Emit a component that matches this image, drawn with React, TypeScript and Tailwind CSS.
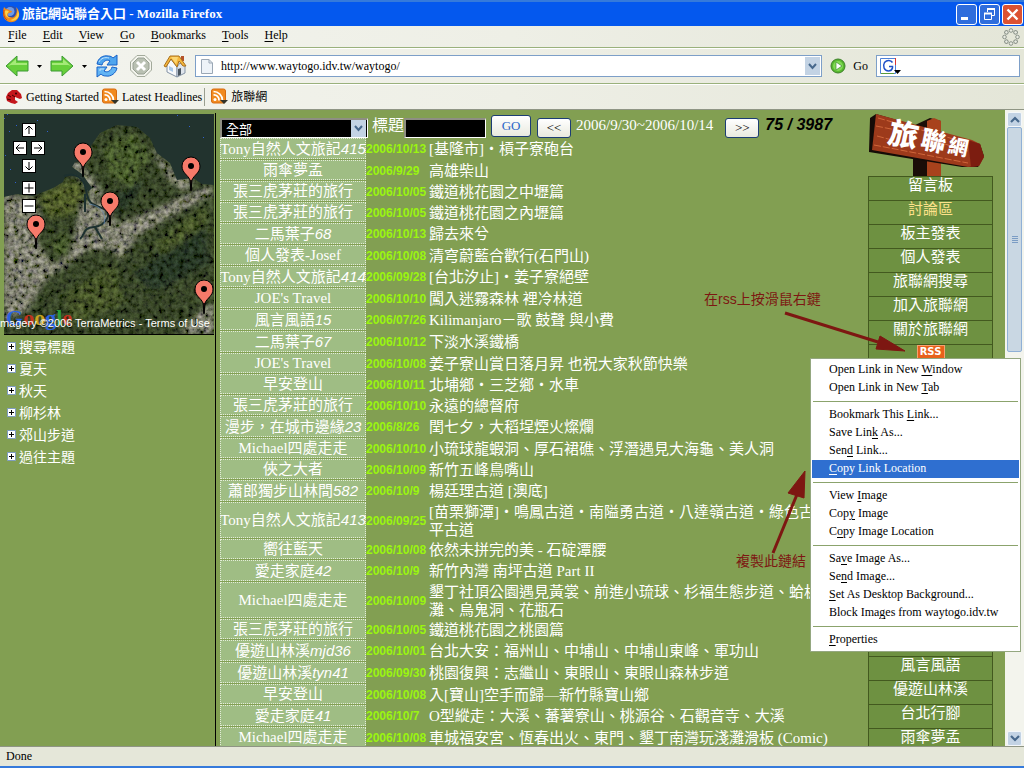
import React from 'react';

type Trip = { name: string; num?: string; date: string; title: string; more?: string };

const trips: Trip[] = [
  { name: 'Tony自然人文旅記', num: '415', date: '2006/10/13', title: '[基隆市]・槓子寮砲台' },
  { name: '雨傘夢孟', date: '2006/9/29', title: '高雄柴山' },
  { name: '張三虎茅莊的旅行', date: '2006/10/05', title: '鐵道桃花園之中壢篇' },
  { name: '張三虎茅莊的旅行', date: '2006/10/05', title: '鐵道桃花園之內壢篇' },
  { name: '二馬葉子', num: '68', date: '2006/10/13', title: '歸去來兮' },
  { name: '個人發表-Josef', date: '2006/10/08', title: '清穹蔚藍合歡行(石門山)' },
  { name: 'Tony自然人文旅記', num: '414', date: '2006/09/28', title: '[台北汐止]・姜子寮絕壁' },
  { name: "JOE's Travel", date: '2006/10/10', title: '闖入迷霧森林 裡冷林道' },
  { name: '風言風語', num: '15', date: '2006/07/26', title: 'Kilimanjaro－歌 鼓聲 與小費' },
  { name: '二馬葉子', num: '67', date: '2006/10/12', title: '下淡水溪鐵橋' },
  { name: "JOE's Travel", date: '2006/10/08', title: '姜子寮山賞日落月昇 也祝大家秋節快樂' },
  { name: '早安登山', date: '2006/10/11', title: '北埔鄉・三芝鄉・水車' },
  { name: '張三虎茅莊的旅行', date: '2006/10/10', title: '永遠的總督府' },
  { name: '漫步，在城市邊緣', num: '23', date: '2006/8/26', title: '閏七夕，大稻埕煙火燦爛' },
  { name: 'Michael四處走走', date: '2006/10/10', title: '小琉球龍蝦洞、厚石裙礁、浮潛遇見大海龜、美人洞' },
  { name: '俠之大者', date: '2006/10/09', title: '新竹五峰鳥嘴山' },
  { name: '蕭郎獨步山林間', num: '582', date: '2006/10/9', title: '楊廷理古道 [澳底]' },
  { name: 'Tony自然人文旅記', num: '413', date: '2006/09/25', title: '[苗栗獅潭]・鳴鳳古道・南隘勇古道・八達嶺古道・綠色古', more: '平古道' },
  { name: '嚮往藍天', date: '2006/10/08', title: '依然未拼完的美 - 石碇潭腰' },
  { name: '愛走家庭', num: '42', date: '2006/10/9', title: '新竹內灣 南坪古道 Part II' },
  { name: 'Michael四處走走', date: '2006/10/09', title: '墾丁社頂公園遇見黃裳、前進小琉球、杉福生態步道、蛤板', more: '灘、烏鬼洞、花瓶石' },
  { name: '張三虎茅莊的旅行', date: '2006/10/05', title: '鐵道桃花園之桃園篇' },
  { name: '優遊山林溪', num: 'mjd36', date: '2006/10/01', title: '台北大安：福州山、中埔山、中埔山東峰、軍功山' },
  { name: '優遊山林溪', num: 'tyn41', date: '2006/09/30', title: '桃園復興：志繼山、東眼山、東眼山森林步道' },
  { name: '早安登山', date: '2006/10/08', title: '入[寶山]空手而歸—新竹縣寶山鄉' },
  { name: '愛走家庭', num: '41', date: '2006/10/7', title: 'O型縱走：大溪、蕃薯寮山、桃源谷、石觀音寺、大溪' },
  { name: 'Michael四處走走', date: '2006/10/08', title: '車城福安宮、恆春出火、東門、墾丁南灣玩淺灘滑板 (Comic)' },
];

function Key({ text, at }: { text: string; at: number }) {
  return (
    <span className="whitespace-pre">
      {text.slice(0, at)}
      <span className="underline underline-offset-2">{text[at]}</span>
      {text.slice(at + 1)}
    </span>
  );
}

function FirefoxIcon() {
  return (
    <svg viewBox="0 0 18 18" className="size-[18px]">
      <circle cx="9" cy="8.500" r="7.500" fill="#2a4fb0" />
      <circle cx="8" cy="6.500" r="4.500" fill="#6f9be6" />
      <path d="M2 2 C0 8 1 14 5 16 C10 19 16 16 17 11 C17.500 8 17 5 14 2 C15 5 15 7 14 9 C13 12 11 13 8 12 C5 11.500 5 9 7 8 C9 8 10 7 10 6 C8 6 7 4 4 4 Z" fill="#f08a1c" />
      <path d="M15 3 C17 9 14 14 8 15 C12 17 17 14 17 9 Z" fill="#fbd24a" />
      <path d="M3 6 C4 5 6 6 7 6.500 L5 9 C5 11 6 12 8 13 C5 13 3 11 3 6" fill="#fbd24a" />
      <path d="M2 5 C1 9 2 13 5 15" stroke="#c34410" fill="none" />
    </svg>
  );
}

function RssIcon() {
  return (
    <svg viewBox="0 0 18 18" className="size-[18px]">
      <rect x="0.500" y="1" width="14" height="14" rx="2" fill="#f18a1f" stroke="#d66a10" />
      <circle cx="4" cy="11.500" r="1.500" fill="#fff" />
      <path d="M2.500 7 A5 5 0 0 1 8 12.500 M2.500 3.500 A9 9 0 0 1 11.500 12.500" stroke="#fff" strokeWidth="1.700" fill="none" />
      <path d="M9 12 H17 L13 16 Z" fill="#33332a" />
    </svg>
  );
}

function Arrow({ flip }: { flip?: boolean }) {
  return (
    <svg viewBox="0 0 24 22" className={flip ? 'h-[22px] w-6 -scale-x-100' : 'h-[22px] w-6'}>
      <path d="M1 11 L12 1 V6 H23 V16 H12 V21 Z" fill="#67cf3a" stroke="#3d9a34" strokeLinejoin="round" />
      <path d="M3 11 L11 4 V8 H22 V10 H6 Z" fill="#a5ea78" />
    </svg>
  );
}

function Tri() {
  return (
    <svg viewBox="0 0 5 3" className="h-[3px] w-[5px]">
      <path d="M0 0 H5 L2.500 3 Z" fill="#000" />
    </svg>
  );
}

function ReloadIcon() {
  return (
    <svg viewBox="0 0 24 24" className="size-6">
      <path d="M2 10 C3 4 8 1 13 2 C16 2 17 3 18 4 L22 1 V11 H12 L15 7 C12 5 8 7 7 11 Z" fill="#4fa5ee" stroke="#1560c8" strokeLinejoin="round" />
      <path d="M22 14 C21 19 16 23 11 22 C8 22 7 21 6 20 L2 23 V13 H12 L9 17 C12 19 16 17 17 13 Z" fill="#62b4f4" stroke="#1560c8" strokeLinejoin="round" />
      <path d="M4 8 C6 4 10 3 14 4 M5 17 V15 H9" stroke="#c3e4fb" fill="none" />
    </svg>
  );
}

function StopIcon() {
  return (
    <svg viewBox="0 0 24 24" className="size-6">
      <path d="M8 1.500 H16 L22.500 8 V16 L16 22.500 H8 L1.500 16 V8 Z" fill="#f4f5ee" stroke="#a3aa9b" />
      <path d="M9 4 H15 L20 9 V15 L15 20 H9 L4 15 V9 Z" fill="#b9c0b2" stroke="#98a093" />
      <path d="M8 8 L16 16 M16 8 L8 16" stroke="#fff" strokeWidth="3" />
    </svg>
  );
}

function HomeIcon() {
  return (
    <svg viewBox="0 0 24 24" className="size-6">
      <path d="M4 11 L8 5 L14 13 V23 L4 18 Z" fill="#f7f9fb" stroke="#8493a6" />
      <path d="M14 13 L17 9 L22 12 V19 L14 23 Z" fill="#dfe5ec" stroke="#8493a6" />
      <path d="M15 15 L18 14 V20.500 L15 22 Z" fill="#4a5560" />
      <path d="M6 12 L10 14 V18 L6 16 Z" fill="#a9c8e8" />
      <path d="M18 2 H21 V7 H18 Z" fill="#b5532a" />
      <path d="M1 12 L7 2 H16 L23 12 L20 12 L16 7 L14 13 L8 5 L3 13 Z" fill="#f6b73c" stroke="#a8701c" strokeLinejoin="round" />
      <path d="M8 3 H15 L13 10 Z" fill="#fbd673" />
    </svg>
  );
}

function TitleBar() {
  const frame = 'flex size-[21px] items-center justify-center rounded-[3px] border border-white';
  return (
    <header className="flex h-[26px] shrink-0 items-center border-t-2 border-[#357adb] bg-[#0458ee] pr-px pl-[2px]">
      <FirefoxIcon />
      <h1 className="ml-[2px] flex-1 text-[13px] leading-5 font-bold text-white">旅記網站聯合入口 - Mozilla Firefox</h1>
      <div className="flex gap-[2px]">
        <button aria-label="Minimize" className={frame + ' bg-[#2f6ddc]'}>
          <svg viewBox="0 0 19 19" className="size-[19px]"><path d="M4 12 H11 V15 H4 Z" fill="#fff" /></svg>
        </button>
        <button aria-label="Restore" className={frame + ' bg-[#2f6ddc]'}>
          <svg viewBox="0 0 19 19" className="size-[19px]" fill="none" stroke="#fff">
            <path d="M7.500 7 V4 H14.500 V10.500 H12" strokeWidth="1" /><path d="M7 4 H15" strokeWidth="2" />
            <path d="M4.500 8.500 H11.500 V14.500 H4.500 Z" /><path d="M4 8.500 H12" strokeWidth="2" />
          </svg>
        </button>
        <button aria-label="Close" className={frame + ' bg-[#dc5232]'}>
          <svg viewBox="0 0 19 19" className="size-[19px]"><path d="M4.500 4.500 L14.500 14.500 M14.500 4.500 L4.500 14.500" stroke="#fff" strokeWidth="2.400" /></svg>
        </button>
      </div>
    </header>
  );
}

function Chrome() {
  const bar = 'flex shrink-0 items-center bg-linear-to-r from-[#f3f4ee] via-[#eeefe6] to-[#e4e6d8]';
  return (
    <>
      <nav className={bar + ' h-[22px] border-b border-[#9ab17c] pr-1 pl-2'}>
        <ul className="flex flex-1 gap-4 pb-[3px] leading-4">
          {['File', 'Edit', 'View', 'Go', 'Bookmarks', 'Tools', 'Help'].map((m) => (
            <li key={m}><button><Key text={m} at={0} /></button></li>
          ))}
        </ul>
        <svg viewBox="0 0 18 18" className="size-[18px]" fill="#e9ebe2" stroke="#8b938a">
          {[0, 45, 90, 135, 180, 225, 270, 315].map((a) => (
            <circle key={a} cx="9" cy="2.500" r="1.800" transform={`rotate(${a} 9 9)`} />
          ))}
        </svg>
      </nav>
      <div className={bar + ' h-9 border-t border-b border-t-white border-b-[#9ab17c] pr-1 pl-[5px]'}>
        <button aria-label="Back"><Arrow /></button>
        <button aria-label="Back history" className="ml-2"><Tri /></button>
        <button aria-label="Forward" className="ml-2"><Arrow flip /></button>
        <button aria-label="Forward history" className="ml-2"><Tri /></button>
        <button aria-label="Reload" className="ml-2"><ReloadIcon /></button>
        <button aria-label="Stop" className="ml-[10px]"><StopIcon /></button>
        <button aria-label="Home" className="ml-[10px]"><HomeIcon /></button>
        <div className="ml-2 flex h-[22px] flex-1 items-center border border-[#7d9fc8] bg-white pr-px pl-[5px]">
          <svg viewBox="0 0 12 15" className="h-[15px] w-3">
            <path d="M0.500 0.500 H8 L11.500 4 V14.500 H0.500 Z" fill="#eef3f8" stroke="#9aa7b5" /><path d="M8 0.500 V4 H11.500" fill="none" stroke="#9aa7b5" />
          </svg>
          <input aria-label="Location" defaultValue="http://www.waytogo.idv.tw/waytogo/" className="ml-2 min-w-0 flex-1 bg-transparent leading-4 outline-none" />
          <button aria-label="Show history" className="flex h-[18px] w-[15px] items-center justify-center bg-[#c3d3e4]">
            <svg viewBox="0 0 9 7" className="h-[7px] w-[9px]"><path d="M1 1 L4.500 5 L8 1" fill="none" stroke="#47688c" strokeWidth="2" /></svg>
          </button>
        </div>
        <button className="ml-2 flex items-center gap-[7px]">
          <svg viewBox="0 0 16 16" className="size-4"><circle cx="8" cy="8" r="7" fill="#57b82f" stroke="#3d7f2a" /><circle cx="8" cy="8" r="5" fill="#82d957" /><path d="M6 4 L12 8 L6 12 Z" fill="#fff" stroke="#3f8f2c" strokeWidth="0.700" /></svg>
          Go
        </button>
        <div className="ml-2 flex h-[22px] w-36 items-center border border-[#7d9fc8] bg-white pl-[3px]">
          <svg viewBox="0 0 22 18" className="h-[18px] w-[22px]">
            <path d="M0.500 1.500 H15.500 V16.500 H0.500 Z" fill="#fff" stroke="#4d80d8" /><path d="M15.500 1 V8" stroke="#d33" /><path d="M1 16.500 H14" stroke="#5a9a3a" />
            <path d="M12.500 5.500 C11 3 7 2.500 4.500 5.500 C2.500 9 4 14 8.500 14 C11 14 12 12.500 12.500 11 V9.500 H9" fill="none" stroke="#1f50c8" strokeWidth="1.500" />
            <path d="M14 13 H21 L17.500 17 Z" fill="#000" />
          </svg>
          <input aria-label="Search" className="min-w-0 flex-1 bg-transparent outline-none" />
        </div>
      </div>
      <nav className={bar + ' h-[26px] border-t border-b border-t-white border-b-[#8f9584] pl-[6px]'}>
        <a href="#start" className="flex items-center gap-1">
          <svg viewBox="0 0 16 16" className="size-4">
            <path d="M0 8 L2 4 L6 1 L11 1 L15 5 L16 9 L14 10 L9 8 L9 11 L12 13 L9 15 L5 14 L1 12 Z" fill="#c4161c" />
            <path d="M2 6 L5 8 M1 10 L5 11 M9 8 L6 6" stroke="#400" fill="none" /><circle cx="10" cy="4.500" r="1" fill="#300" />
          </svg>
          Getting Started
        </a>
        <button className="ml-[3px] flex items-center gap-[2px]"><RssIcon />Latest Headlines</button>
        <span className="mx-[2px] h-[18px] w-px bg-[#9a9f90]" />
        <button className="ml-1 flex items-center gap-[2px]"><RssIcon />旅聯網</button>
      </nav>
    </>
  );
}

function MapButton({ label, d }: { label: string; d: string }) {
  return (
    <button aria-label={label} className="size-[14px] border border-black bg-white">
      <svg viewBox="0 0 12 12" className="size-3"><path d={d} stroke="#000" fill="none" /></svg>
    </button>
  );
}

function SatelliteMap() {
  const pins = [[79, 61], [32, 133], [106, 110], [187, 75], [200, 198]];
  return (
    <section aria-label="Map" className="relative h-[221px] w-[210px] border-b border-black bg-[#22332e]">
      <svg viewBox="0 0 210 220" className="h-[220px] w-[210px]">
        <defs>
          <filter id="grain" x="0" y="0" width="100%" height="100%">
            <feTurbulence type="fractalNoise" baseFrequency="0.200" numOctaves="4" seed="4" result="n" />
            <feColorMatrix in="n" type="matrix" values="1.500 0.200 0 0 -0.420  1.400 0.300 0 0 -0.420  1.400 0 0.200 0 -0.420  0 0 0 0 1" result="c" />
            <feComposite in="c" in2="SourceGraphic" operator="in" result="m" />
            <feBlend in="m" in2="SourceGraphic" mode="overlay" />
          </filter>
          <filter id="soft"><feGaussianBlur stdDeviation="2.500" /></filter>
          <clipPath id="land">
            <path d="M0 83 L13 80 L29 82 L49 74 L59 68 L61 63 L70 60 L78 64 L84 78 L88 74 L78 60 L68 53 L71 48 L80 47 L86 33 L96 19 L113 11 L133 13 L146 24 L153 39 L166 49 L173 66 L189 64 L198 70 L210 71 V220 H0 Z" />
          </clipPath>
        </defs>
        <g clipPath="url(#land)">
          <g filter="url(#grain)">
            <rect width="210" height="220" fill="#3b492d" />
            <g filter="url(#soft)">
              <path d="M0 80 L30 84 L36 100 L34 130 L50 150 L66 140 L72 112 L76 90 L90 84 L104 92 L112 110 L140 100 L170 86 L205 72 L210 80 L160 106 L134 122 L116 146 L108 136 L84 136 L58 154 L40 168 L24 196 L0 206 Z" fill="#85867b" />
              <path d="M66 48 L74 46 L90 66 L100 82 L88 84 Z M146 34 L154 40 L172 60 L190 66 L182 78 L166 68 Z M176 220 L196 196 L210 190 V220 Z" fill="#85877b" />
              <path d="M34 84 L58 70 L76 66 L80 82 L70 100 L46 104 Z" fill="#53602f" />
              <path d="M46 130 L62 120 L68 132 L56 144 Z M100 30 L130 20 L146 40 L128 74 L104 60 Z" fill="#4c5e30" />
              <path d="M108 82 L140 66 L130 86 L110 104 Z M130 160 L200 110 L206 150 L150 178 Z" fill="#2c3a2b" />
              <path d="M150 130 L200 90 L204 110 L160 140 Z M60 180 L110 150 L120 190 L70 210 Z" fill="#48592e" />
            </g>
          </g>
        </g>
        <path d="M60 62 C72 58 80 64 82 76 S86 90 98 94 S102 112 90 113 S82 120 76 125 M91 113 L98 125 M81 80 L81 98" fill="none" stroke="#1d302f" strokeWidth="2" />
        <path d="M85 90 C96 92 103 98 100 110" fill="none" stroke="#6a8fb8" strokeWidth="0.700" />
        <g fill="#3061cf">
          {[3, 12, 23, 33, 43, 173, 185, 199].map((x, i) => (
            <rect key={x} x={x} y={(i * 11) % 27} width="1" height="1" />
          ))}
          {[4, 17, 29, 41, 55, 68].map((y, i) => (
            <rect key={y} x={(i * 5) % 14} y={y} width="1" height="1" />
          ))}
        </g>
        {pins.map(([x, y]) => (
          <g key={x} transform={`translate(${x} ${y})`}>
            <path d="M0 1 L-1 -9 C-3 -14 -9 -16 -9 -23 A9 9 0 0 1 9 -23 C9 -16 3 -14 1 -9 Z" fill="#f67a6a" stroke="#000" />
            <path d="M0 2 V-9" stroke="#000" strokeWidth="1.500" /><circle cy="-23" r="3" fill="#000" />
          </g>
        ))}
      </svg>
      <div className="absolute top-[9px] left-[9px] grid w-8 grid-cols-2 gap-[4px]">
        <div className="col-span-2 flex justify-center"><MapButton label="Pan up" d="M6 10 V2 M2.500 5.500 L6 2 L9.500 5.500" /></div>
        <MapButton label="Pan left" d="M10 6 H2 M5.500 2.500 L2 6 L5.500 9.500" />
        <MapButton label="Pan right" d="M2 6 H10 M6.500 2.500 L10 6 L6.500 9.500" />
        <div className="col-span-2 flex flex-col items-center gap-[4px]">
          <MapButton label="Pan down" d="M6 2 V10 M2.500 6.500 L6 10 L9.500 6.500" />
          <span className="h-[2px] -my-[1px]" />
          <MapButton label="Zoom in" d="M1.500 6 H10.500 M6 1.500 V10.500" />
          <MapButton label="Zoom out" d="M1.500 6 H10.500" />
        </div>
      </div>
      <div className="absolute bottom-1 left-[2px] text-[22px] leading-6 font-bold" aria-label="Google">
        <span className="text-[#2b63e0]">G</span><span className="text-[#c2331f]">o</span><span className="text-[#c9a21f]">o</span>
        <span className="text-[#2b63e0]">g</span><span className="text-[#2d9a3a]">l</span><span className="text-[#c2331f]">e</span>
      </div>
      <p className="absolute right-1 bottom-1 font-['Liberation_Sans',sans-serif] text-[11px] leading-[14px] whitespace-nowrap text-white">
        Imagery ©2006 TerraMetrics - Terms of Use
      </p>
    </section>
  );
}

function SignPost() {
  return (
    <div className="relative h-16">
      <svg viewBox="0 0 125 64" className="h-16 w-[125px]">
        <path d="M45 14 L62 6 L73 9 V64 H45 Z" fill="#1a0d08" />
        <path d="M59 9 L66 6 L73 9 V64 H59 Z" fill="#a8421c" />
        <path d="M2 6 L8 2 L112 32 L116 44 L110 55 L94 55 L1 40 Z" fill="#150b07" />
        <path d="M8 2 L104 28 L112 32 L116 45 L111 54 L100 55 L4 38 Z" fill="#9d3a1b" />
        <path d="M100 28 L112 32 L116 45 L111 54 L103 55 Z" fill="#7c1d10" />
        <path d="M10 6 L100 31 M8 14 L28 18 M6 33 L100 51 M9 24 L24 28 M60 27 L100 39" stroke="#d0663a" strokeDasharray="7 2" fill="none" />
      </svg>
      <h2 className="absolute top-[13px] left-5 flex rotate-12 items-center gap-[3px] font-black text-white">
        <span className="text-[30px] leading-8">旅</span>
        <span className="text-[25px] leading-8">聯</span>
        <span className="text-[20px] leading-8">網</span>
      </h2>
    </div>
  );
}

function SideMenu() {
  const cell = 'flex h-6 w-full items-start justify-center border-x border-t border-[#43591f] bg-[#6e9141] leading-4';
  return (
    <aside className="mr-3 w-[125px] shrink-0 pt-[2px]">
      <SignPost />
      <ul className="text-[15px] text-white">
        {['留言板', '討論區', '板主發表', '個人發表', '旅聯網搜尋', '加入旅聯網', '關於旅聯網'].map((t) => (
          <li key={t}><a href="#menu" className={t === '討論區' ? cell + ' text-[#fde18a]' : cell}>{t}</a></li>
        ))}
        <li className={cell}>
          <a href="#rss" className="h-[14px] w-7 border border-[#f6a070] bg-[#e8611a] text-center font-['DejaVu_Sans',sans-serif] text-[10px] leading-3 font-bold">RSS</a>
        </li>
        {Array.from({ length: 12 }, (_, i) => <li key={i} className={cell} />)}
        {['風言風語', '優遊山林溪', '台北行腳', '雨傘夢孟'].map((t) => (
          <li key={t}><a href="#menu" className={cell}>{t}</a></li>
        ))}
      </ul>
    </aside>
  );
}

function TripList() {
  const btn = 'rounded-[3px] border border-[#1c3d74] bg-linear-to-b from-white to-[#e9eadf] font-["Liberation_Serif",serif] text-[13px] leading-4';
  return (
    <main className="min-w-0 flex-1 pl-1 text-[15px] text-white">
      <form className="flex h-7 items-start pt-2">
        <div className="flex h-5 w-[148px] items-center border border-t-2 border-l-2 border-[#8e8e83] border-r-white border-b-white bg-black pr-px">
          <select aria-label="版主" className="h-full min-w-0 flex-1 appearance-none bg-black pl-1 text-[13px] text-white outline-none">
            <option>全部</option>
          </select>
          <span className="flex h-[17px] w-[15px] items-center justify-center bg-[#c3d3e4]">
            <svg viewBox="0 0 9 7" className="h-[7px] w-[9px]"><path d="M1 1 L4.500 5 L8 1" fill="none" stroke="#47688c" strokeWidth="2" /></svg>
          </span>
        </div>
        <label htmlFor="topic" className="ml-1 text-[16px] leading-4 whitespace-nowrap">標題</label>
        <input id="topic" className="h-5 w-[82px] border border-t-2 border-l-2 border-[#8e8e83] border-r-white border-b-white bg-black px-1 outline-none" />
        <button type="button" className={btn + ' -mt-[3px] ml-[5px] h-[22px] w-10 text-[#2a66c8]'}>GO</button>
        <button type="button" className={btn + ' ml-[6px] h-5 w-[34px] text-black'}>&lt;&lt;</button>
        <span className="ml-[5px] leading-[15px] whitespace-nowrap">2006/9/30~2006/10/14</span>
        <button type="button" className={btn + ' ml-3 h-5 w-[34px] text-black'}>&gt;&gt;</button>
        <strong className="ml-[6px] font-['Liberation_Sans',sans-serif] text-[16px] leading-[14px] whitespace-nowrap text-black italic">75 / 3987</strong>
      </form>
      <table className="w-full table-fixed border-collapse">
        <colgroup><col className="w-[146px]" /><col className="w-[63px]" /><col /></colgroup>
        <tbody>
          {trips.map((t, i) => {
            const h = t.more ? 'h-9' : t.num ? 'h-[21px]' : 'h-5';
            return (
              <tr key={i}>
                <td className="p-0 pb-px">
                  <a href="#author" className={h + ' flex items-center justify-center border border-dotted border-[#e3ecd8] bg-[#9fbd84] leading-[18px] whitespace-nowrap'}>
                    {t.name}
                    {t.num && <i className="font-['Liberation_Sans',sans-serif]">{t.num}</i>}
                  </a>
                </td>
                <td className="p-0 font-['Liberation_Sans',sans-serif] text-[12px] leading-[18px] font-bold text-[#9af50f]">{t.date}</td>
                <td className="p-0 leading-[18px] whitespace-nowrap">
                  <a href="#trip">{t.title}{t.more && <><br />{t.more}</>}</a>
                </td>
              </tr>
            );
          })}
        </tbody>
      </table>
    </main>
  );
}

function ScrollBar() {
  const end = 'flex h-[15px] items-center justify-center rounded-[2px] border border-[#f4f7fa] bg-[#c3d3e4]';
  return (
    <div className="flex w-[19px] shrink-0 flex-col bg-[#f3f4ed] px-[2px] pt-[2px]">
      <button aria-label="Scroll up" className={end}><svg viewBox="0 0 10 7" className="h-[7px] w-[10px]"><path d="M1 6 L5 2 L9 6" fill="none" stroke="#47688c" strokeWidth="2.200" /></svg></button>
      <div className="flex h-[225px] flex-col items-center justify-center gap-px rounded-[2px] border border-[#8fb0d6] bg-[#c9d7e3]">
        {[0, 1, 2, 3].map((i) => <span key={i} className="h-px w-[6px] border-b border-[#7b9cc4] bg-white" />)}
      </div>
      <button aria-label="Scroll down" className={end + ' mt-auto'}><svg viewBox="0 0 10 7" className="h-[7px] w-[10px]"><path d="M1 1 L5 5 L9 1" fill="none" stroke="#47688c" strokeWidth="2.200" /></svg></button>
    </div>
  );
}

const menuGroups: [string, number][][] = [
  [['Open Link in New Window', 17], ['Open Link in New Tab', 17]],
  [['Bookmark This Link...', 14], ['Save Link As...', 8], ['Send Link...', 3], ['Copy Link Location', 0]],
  [['View Image', 5], ['Copy Image', 3], ['Copy Image Location', 1]],
  [['Save Image As...', 2], ['Send Image...', 2], ['Set As Desktop Background...', 0], ['Block Images from waytogo.idv.tw', 9]],
  [['Properties', 0]],
];

function ContextMenu() {
  return (
    <div role="menu" className="absolute top-[248px] left-[810px] w-[211px] border border-[#94a780] bg-white px-px py-[2px]">
      {menuGroups.map((g, i) => (
        <div key={i}>
          {i > 0 && <hr className="mx-px my-1 border-[#8ba36c]" />}
          {g.map(([t, at]) => (
            <button
              key={t}
              role="menuitem"
              className={t === 'Copy Link Location' ? 'block h-[18px] w-full bg-[#2f6fd0] pb-[2px] pl-[17px] text-left leading-4 text-white' : 'block h-[18px] w-full pb-[2px] pl-[17px] text-left leading-4'}
            >
              <Key text={t} at={at} />
            </button>
          ))}
        </div>
      ))}
    </div>
  );
}

export default function App() {
  return (
    <div lang="zh-Hant" className="flex h-screen flex-col overflow-hidden bg-[#e5e7d9] font-['Liberation_Serif','Noto_Sans_CJK_TC',serif] text-[12px] text-black">
      <TitleBar />
      <Chrome />
      <div className="relative flex min-h-0 flex-1 overflow-hidden bg-[#829f52]">
        <div className="mt-[3px] w-[216px] shrink-0 border-r border-black pt-px pl-1">
          <SatelliteMap />
          <ul className="pt-[2px] pl-[3px] text-[14px] leading-[22px] text-white">
            {['搜尋標題', '夏天', '秋天', '柳杉林', '郊山步道', '過往主題'].map((t) => (
              <li key={t}>
                <button className="flex items-center gap-[3px]">
                  <svg viewBox="0 0 9 9" className="mb-1 size-[9px]"><path d="M0.500 0.500 H8.500 V8.500 H0.500 Z" fill="#fff" stroke="#7f9cc0" /><path d="M2 4.500 H7 M4.500 2 V7" stroke="#000" /></svg>
                  {t}
                </button>
              </li>
            ))}
          </ul>
        </div>
        <TripList />
        <SideMenu />
        <ScrollBar />
        <svg viewBox="0 0 240 260" className="pointer-events-none absolute top-[190px] left-[700px] h-[260px] w-60">
          <g fill="#7d1712" stroke="#7d1712">
            <path d="M85 13 L178 42" strokeWidth="3" /><path d="M180 36 L205 51 L176 49 Z" />
            <path d="M73 253 L98 192" strokeWidth="3" /><path d="M88 193 L105 171 L104 198 Z" />
          </g>
        </svg>
        <span className="absolute top-[180px] left-[704px] text-[14px] leading-[18px] whitespace-nowrap text-[#7d1712]">
          在<span className="font-['Liberation_Sans',sans-serif]">rss</span>上按滑鼠右鍵
        </span>
        <span className="absolute top-[443px] left-[736px] text-[14px] leading-[18px] whitespace-nowrap text-[#7d1712]">複製此鏈結</span>
        <ContextMenu />
      </div>
      <footer className="h-[22px] shrink-0 border-t border-b-2 border-t-[#8f9584] border-b-[#357adb] pl-[6px] leading-[18px]">Done</footer>
    </div>
  );
}
